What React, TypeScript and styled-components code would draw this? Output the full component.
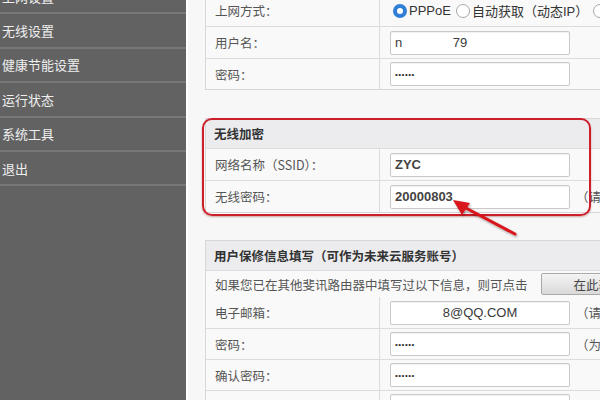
import React from "react";
import styled, { createGlobalStyle, css } from "styled-components";

const Global = createGlobalStyle`
  html, body { margin: 0; padding: 0; }
  body {
    width: 600px; height: 400px; overflow: hidden;
    font-family: "Liberation Sans", "Noto Sans CJK SC", sans-serif;
    background: #f7f7f7;
  }
`;

const Page = styled.div`
  display: flex;
  width: 600px;
  height: 400px;
  overflow: hidden;
`;

const Sidebar = styled.nav`
  width: 186px;
  flex: none;
  background: #626262;
  display: flex;
  flex-direction: column;
`;

const MenuList = styled.div`
  margin-top: -20px;
  display: flex;
  flex-direction: column;
`;

const MenuItem = styled.div`
  height: 32.4px;
  border-bottom: 2px solid #787878;
  display: flex;
  align-items: center;
  padding-left: 2px;
  color: #efefef;
  font-size: 13px;
  font-family: "Noto Sans CJK SC", sans-serif;
`;

const Main = styled.main`
  flex: 1;
  border-left: 2px solid #ffffff;
  background: #f7f7f7;
  padding-left: 17px;
  overflow: hidden;
  display: flex;
  flex-direction: column;
`;

const Section = styled.section<{ $gap: number }>`
  position: relative;
  width: 440px;
  margin-top: ${(p) => p.$gap}px;
`;

const Table = styled.div`
  border: 1px solid #d7d7d7;
  display: flex;
  flex-direction: column;
  background: #f9f9f9;
`;

const Header = styled.div`
  height: 29px;
  background: #ececef;
  display: flex;
  align-items: center;
  padding-left: 8px;
  font-size: 12.5px;
  font-weight: bold;
  color: #333;
  font-family: "Noto Sans CJK SC", sans-serif;
`;

const Row = styled.div<{ $h: number }>`
  display: grid;
  grid-template-columns: 174px 1fr;
  height: ${(p) => p.$h}px;
  & + & { border-top: 1px solid #dcdcdc; }
  ${Header} + & { border-top: 1px solid #dcdcdc; }
`;

const Label = styled.div`
  display: flex;
  align-items: center;
  padding-left: 9px;
  font-size: 12.5px;
  color: #555;
  border-right: 1px solid #dcdcdc;
  font-family: "Noto Sans CJK SC", sans-serif;
`;

const Value = styled.div`
  display: flex;
  align-items: center;
  padding-left: 10px;
  gap: 6px;
  white-space: nowrap;
`;

const Notice = styled.div`
  height: 26px;
  border-top: 1px solid #dcdcdc;
  display: flex;
  align-items: center;
  padding-left: 9px;
  font-size: 12.5px;
  color: #555;
  white-space: nowrap;
  font-family: "Noto Sans CJK SC", sans-serif;
`;

const FetchButton = styled.button`
  margin-left: 13px;
  width: 90px;
  height: 22px;
  border: 1px solid #a9a9a9;
  border-radius: 2px;
  background: linear-gradient(#f4f4f4, #d9d9d9);
  font-size: 12.5px;
  color: #444;
  text-align: right;
  padding: 0 6px 0 0;
  font-family: "Noto Sans CJK SC", sans-serif;
`;

const Input = styled.div<{ $bold?: boolean; $center?: boolean; $dots?: boolean }>`
  width: 180px;
  height: 24px;
  box-sizing: border-box;
  border: 1px solid #c9c9c9;
  border-radius: 2px;
  background: #fff;
  box-shadow: inset 0 1px 1px rgba(0,0,0,0.06);
  display: flex;
  align-items: center;
  padding-left: 4px;
  font-size: 13px;
  color: #3a3a3a;
  white-space: pre;
  ${(p) => p.$bold && css`font-weight: bold; color: #444;`}
  ${(p) => p.$center && css`justify-content: center; padding-left: 0;`}
  ${(p) => p.$dots && css`font-size: 8px; letter-spacing: 0.5px; color: #333;`}
`;

const Hint = styled.span`
  font-size: 12.5px;
  color: #555;
  font-family: "Noto Sans CJK SC", sans-serif;
`;

const RadioGroup = styled.div`
  display: flex;
  align-items: center;
  padding-left: 3px;
  font-size: 13px;
  color: #333;
  white-space: nowrap;
  font-family: "Liberation Sans", "Noto Sans CJK SC", sans-serif;
`;

const Radio = styled.span<{ $on?: boolean }>`
  width: 14px;
  height: 14px;
  box-sizing: border-box;
  border-radius: 50%;
  margin-right: 2px;
  flex: none;
  ${(p) =>
    p.$on
      ? css`border: 4px solid #2f7fd8; background: #fff;`
      : css`border: 1px solid #a8a8a8; background: #fff;`}
`;

const RadioText = styled.span`
  margin-right: 5px;
`;

const Outline = styled.div`
  position: absolute;
  left: -3px;
  top: 0px;
  width: 389px;
  height: 98px;
  box-sizing: border-box;
  border: 2.5px solid #cc1f2a;
  border-radius: 10px;
  box-shadow: 0 1px 2px rgba(120, 0, 0, 0.35);
  pointer-events: none;
`;

const Arrow = styled.svg`
  position: absolute;
  left: 440px;
  top: 195px;
  width: 90px;
  height: 50px;
  overflow: visible;
  pointer-events: none;
`;

export default function App() {
  return (
    <>
      <Global />
      <Page>
        <Sidebar>
          <MenuList>
            <MenuItem>上网设置</MenuItem>
            <MenuItem>无线设置</MenuItem>
            <MenuItem>健康节能设置</MenuItem>
            <MenuItem>运行状态</MenuItem>
            <MenuItem>系统工具</MenuItem>
            <MenuItem>退出</MenuItem>
          </MenuList>
        </Sidebar>
        <Main>
          <Section $gap={-6}>
            <Table>
              <Row $h={31}>
                <Label>上网方式：</Label>
                <Value>
                  <RadioGroup>
                    <Radio $on />
                    <RadioText>PPPoE</RadioText>
                    <Radio />
                    <RadioText>自动获取（动态IP）</RadioText>
                    <Radio />
                    <RadioText>静态IP</RadioText>
                  </RadioGroup>
                </Value>
              </Row>
              <Row $h={31}>
                <Label>用户名：</Label>
                <Value>
                  <Input>{"n              79"}</Input>
                </Value>
              </Row>
              <Row $h={30}>
                <Label>密码：</Label>
                <Value>
                  <Input $dots>••••••</Input>
                </Value>
              </Row>
            </Table>
          </Section>

          <Section $gap={28}>
            <Table>
              <Header>无线加密</Header>
              <Row $h={31}>
                <Label>网络名称（SSID）：</Label>
                <Value>
                  <Input $bold>ZYC</Input>
                </Value>
              </Row>
              <Row $h={31}>
                <Label>无线密码：</Label>
                <Value>
                  <Input $bold>20000803</Input>
                  <Hint>（请输入8-63位密码）</Hint>
                </Value>
              </Row>
            </Table>
            <Outline />
          </Section>

          <Section $gap={27}>
            <Table>
              <Header>用户保修信息填写（可作为未来云服务账号）</Header>
              <Notice>
                如果您已在其他斐讯路由器中填写过以下信息，则可点击
                <FetchButton>在此获取</FetchButton>
              </Notice>
              <Row $h={31}>
                <Label>电子邮箱：</Label>
                <Value>
                  <Input $center>8@QQ.COM</Input>
                  <Hint>（请输入邮箱）</Hint>
                </Value>
              </Row>
              <Row $h={30}>
                <Label>密码：</Label>
                <Value>
                  <Input $dots>••••••</Input>
                  <Hint>（为云服务密码）</Hint>
                </Value>
              </Row>
              <Row $h={30}>
                <Label>确认密码：</Label>
                <Value>
                  <Input $dots>••••••</Input>
                </Value>
              </Row>
              <Row $h={30}>
                <Label>用户名称：</Label>
                <Value>
                  <Input />
                </Value>
              </Row>
            </Table>
          </Section>
        </Main>
      </Page>
      <Arrow viewBox="0 0 90 50">
        <defs>
          <filter id="sh" x="-20%" y="-20%" width="140%" height="140%">
            <feDropShadow dx="1" dy="1.5" stdDeviation="1" floodColor="#000" floodOpacity="0.35" />
          </filter>
        </defs>
        <g filter="url(#sh)">
          <line x1="75" y1="39" x2="24" y2="12" stroke="#d8141c" strokeWidth="3" strokeLinecap="round" />
          <polygon points="13,5 30,8 22,20" fill="#d8141c" />
        </g>
      </Arrow>
    </>
  );
}
